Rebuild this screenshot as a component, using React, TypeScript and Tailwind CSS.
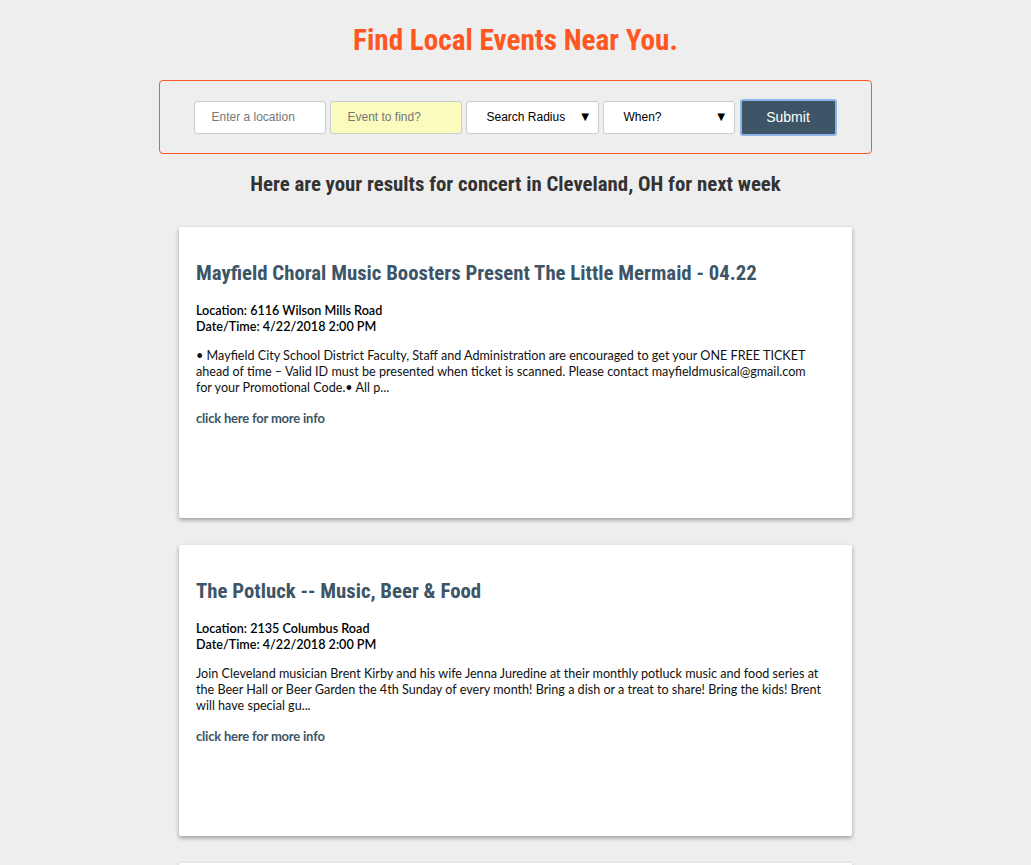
import React from "react";

const cond = { fontFamily: '"Roboto Condensed","Liberation Sans Narrow","DejaVu Sans Condensed",Roboto,sans-serif', fontStretch: "condensed" } as React.CSSProperties;
const body = { fontFamily: 'Lato, "Open Sans", sans-serif' } as React.CSSProperties;

type Ev = { title: string; loc: string; date: string; lines: string[] };

const events: Ev[] = [
  {
    title: "Mayfield Choral Music Boosters Present The Little Mermaid - 04.22",
    loc: "6116 Wilson Mills Road",
    date: "4/22/2018 2:00 PM",
    lines: [
      "• Mayfield City School District Faculty, Staff and Administration are encouraged to get your ONE FREE TICKET",
      "ahead of time – Valid ID must be presented when ticket is scanned. Please contact mayfieldmusical@gmail.com",
      "for your Promotional Code.• All p...",
    ],
  },
  {
    title: "The Potluck -- Music, Beer & Food",
    loc: "2135 Columbus Road",
    date: "4/22/2018 2:00 PM",
    lines: [
      "Join Cleveland musician Brent Kirby and his wife Jenna Juredine at their monthly potluck music and food series at",
      "the Beer Hall or Beer Garden the 4th Sunday of every month! Bring a dish or a treat to share! Bring the kids! Brent",
      "will have special gu...",
    ],
  },
];

function Card({ ev }: { ev: Ev }) {
  return (
    <div className="bg-white w-[673px] h-[291px] rounded-[2px] shadow-[0_2px_4px_rgba(0,0,0,0.35)] px-[17px] pt-[34px] shrink-0">
      <h2 className="text-[20.8px] leading-[24px] font-bold text-[#3d5566] whitespace-nowrap" style={cond}>
        {ev.title}
      </h2>
      <div className="mt-[18px] text-[12.6px] leading-[16px] font-semibold text-black" style={body}>
        <div>Location: {ev.loc}</div>
        <div>Date/Time: {ev.date}</div>
      </div>
      <div className="mt-[13px] text-[12.6px] leading-[16px] text-[#111] whitespace-nowrap" style={body}>
        {ev.lines.map((l, i) => (
          <div key={i}>{l}</div>
        ))}
      </div>
      <a className="block mt-[14px] text-[13px] leading-[16px] font-bold text-[#3d5566] tracking-[-0.2px]" style={body}>
        click here for more info
      </a>
    </div>
  );
}

function Select({ label, w }: { label: string; w: string }) {
  return (
    <div className={`h-[33px] ${w} bg-white border border-[#cccccc] rounded-[3px] flex items-center justify-between pl-[20px] pr-[6px] text-[12px] text-black`}>
      <span>{label}</span>
      <span className="text-[13px]">▼</span>
    </div>
  );
}

export default function App() {
  return (
    <div className="h-[865px] bg-[#eeeeee] flex flex-col items-center overflow-hidden">
      <h1 className="shrink-0 mt-[22px] text-[29.2px] leading-[36px] font-bold text-[#ff5722]" style={cond}>
        Find Local Events Near You.
      </h1>
      <div
        className="shrink-0 mt-[22px] w-[713px] h-[74px] border border-[#ff5722] rounded-[4px] flex items-center justify-center gap-[4px] pr-[1px]"
        style={{ fontFamily: '"Liberation Sans", Arial, sans-serif' }}
      >
        <div className="h-[33px] w-[132px] bg-white border border-[#cccccc] rounded-[3px] flex items-center pl-[17px] text-[12px] text-[#777]">
          Enter a location
        </div>
        <div className="h-[33px] w-[132px] bg-[#fafcbe] border border-[#cccccc] rounded-[3px] flex items-center pl-[17px] text-[12px] text-[#777]">
          Event to find?
        </div>
        <Select label="Search Radius" w="w-[133px]" />
        <Select label="When?" w="w-[132px]" />
        <button className="ml-[1px] h-[37px] w-[97px] bg-[#3d5566] border-2 border-[#8fb4e8] rounded-[3px] text-white text-[14px]">
          Submit
        </button>
      </div>
      <h3 className="shrink-0 mt-[18px] text-[20.8px] leading-[24px] font-bold text-[#333]" style={cond}>
        Here are your results for concert in Cleveland, OH for next week
      </h3>
      <div className="shrink-0 mt-[31px] flex flex-col gap-[27px]">
        {events.map((e, i) => (
          <Card key={i} ev={e} />
        ))}
        <div className="bg-white w-[673px] h-[291px] rounded-[2px] shadow-[0_2px_4px_rgba(0,0,0,0.35)] shrink-0" />
      </div>
    </div>
  );
}
